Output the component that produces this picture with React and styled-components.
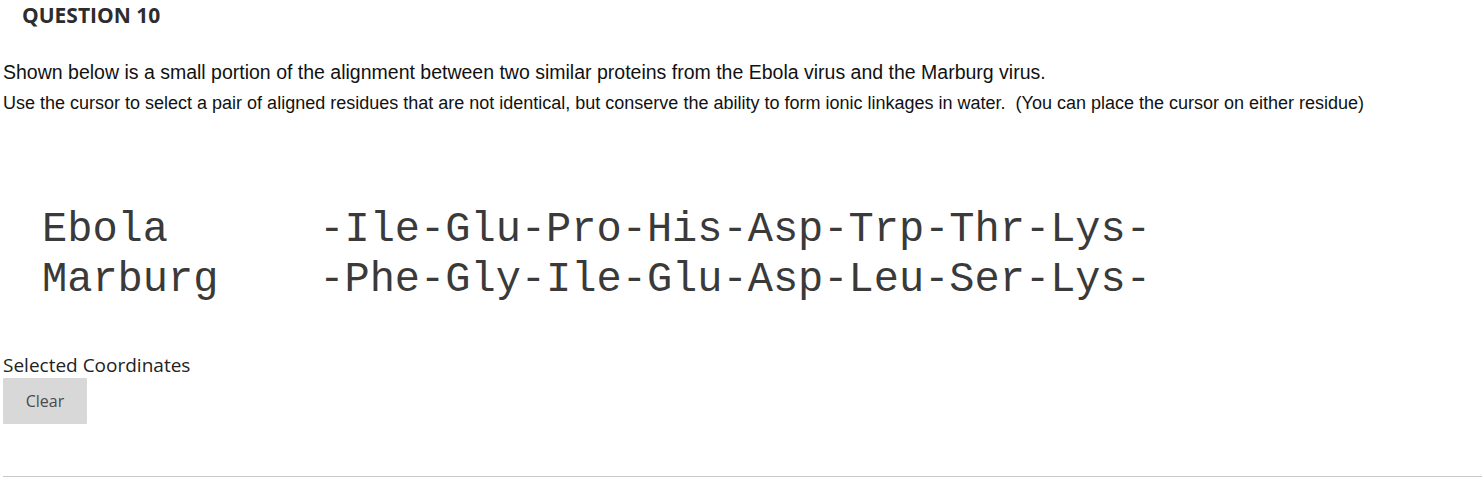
import React from "react";
import styled, { createGlobalStyle } from "styled-components";

const GlobalStyle = createGlobalStyle`
  body {
    margin: 0;
    background: #ffffff;
  }
`;

const Page = styled.div`
  display: flex;
  flex-direction: column;
  padding: 1px 0 0 3px;
  width: 1479px;
`;

const Heading = styled.h2`
  margin: 0 0 0 19px;
  font-family: "Open Sans", sans-serif;
  font-weight: 700;
  font-size: 21px;
  line-height: 28px;
  color: #2d2d2d;
`;

const Prompt = styled.p`
  margin: ${({ first }) => (first ? "31px 0 0" : "7px 0 0")};
  font-family: "Liberation Sans", Arial, sans-serif;
  font-size: ${({ first }) => (first ? "19.5px" : "18px")};
  line-height: 24px;
  white-space: nowrap;
  color: #111;
`;

const Alignment = styled.div`
  display: grid;
  grid-template-columns: 11ch auto;
  margin: 90px 0 0 39px;
  font-family: "Liberation Mono", "Courier New", monospace;
  font-size: 42px;
  line-height: 50px;
  color: #3a3a3a;
`;

const Species = styled.span`
  white-space: pre;
`;

const Sequence = styled.span`
  white-space: pre;
`;

const Caption = styled.div`
  margin-top: 48px;
  font-family: "Open Sans", sans-serif;
  font-size: 19px;
  line-height: 24px;
  color: #222;
`;

const ClearButton = styled.button`
  display: flex;
  align-items: center;
  justify-content: center;
  width: 84px;
  height: 46px;
  margin-top: 1px;
  padding: 0;
  border: none;
  border-radius: 1px;
  background: #d8d8d8;
  font-family: "Open Sans", sans-serif;
  font-size: 16px;
  color: #4a4a4a;
  cursor: pointer;
`;

const Divider = styled.hr`
  margin: 52px 0 0;
  border: none;
  border-top: 1px solid #c8c8c8;
  height: 0;
`;

const rows = [
  { name: "Ebola", seq: "-Ile-Glu-Pro-His-Asp-Trp-Thr-Lys-" },
  { name: "Marburg", seq: "-Phe-Gly-Ile-Glu-Asp-Leu-Ser-Lys-" },
];

export default function App() {
  return (
    <>
      <GlobalStyle />
      <Page>
        <Heading>QUESTION 10</Heading>
        <Prompt first>
          Shown below is a small portion of the alignment between two similar
          proteins from the Ebola virus and the Marburg virus.
        </Prompt>
        <Prompt>
          Use the cursor to select a pair of aligned residues that are not
          identical, but conserve the ability to form ionic linkages in
          water.&nbsp; (You can place the cursor on either residue)
        </Prompt>
        <Alignment>
          {rows.map((r) => (
            <React.Fragment key={r.name}>
              <Species>{r.name}</Species>
              <Sequence>{r.seq}</Sequence>
            </React.Fragment>
          ))}
        </Alignment>
        <Caption>Selected Coordinates</Caption>
        <ClearButton>Clear</ClearButton>
        <Divider />
      </Page>
    </>
  );
}
